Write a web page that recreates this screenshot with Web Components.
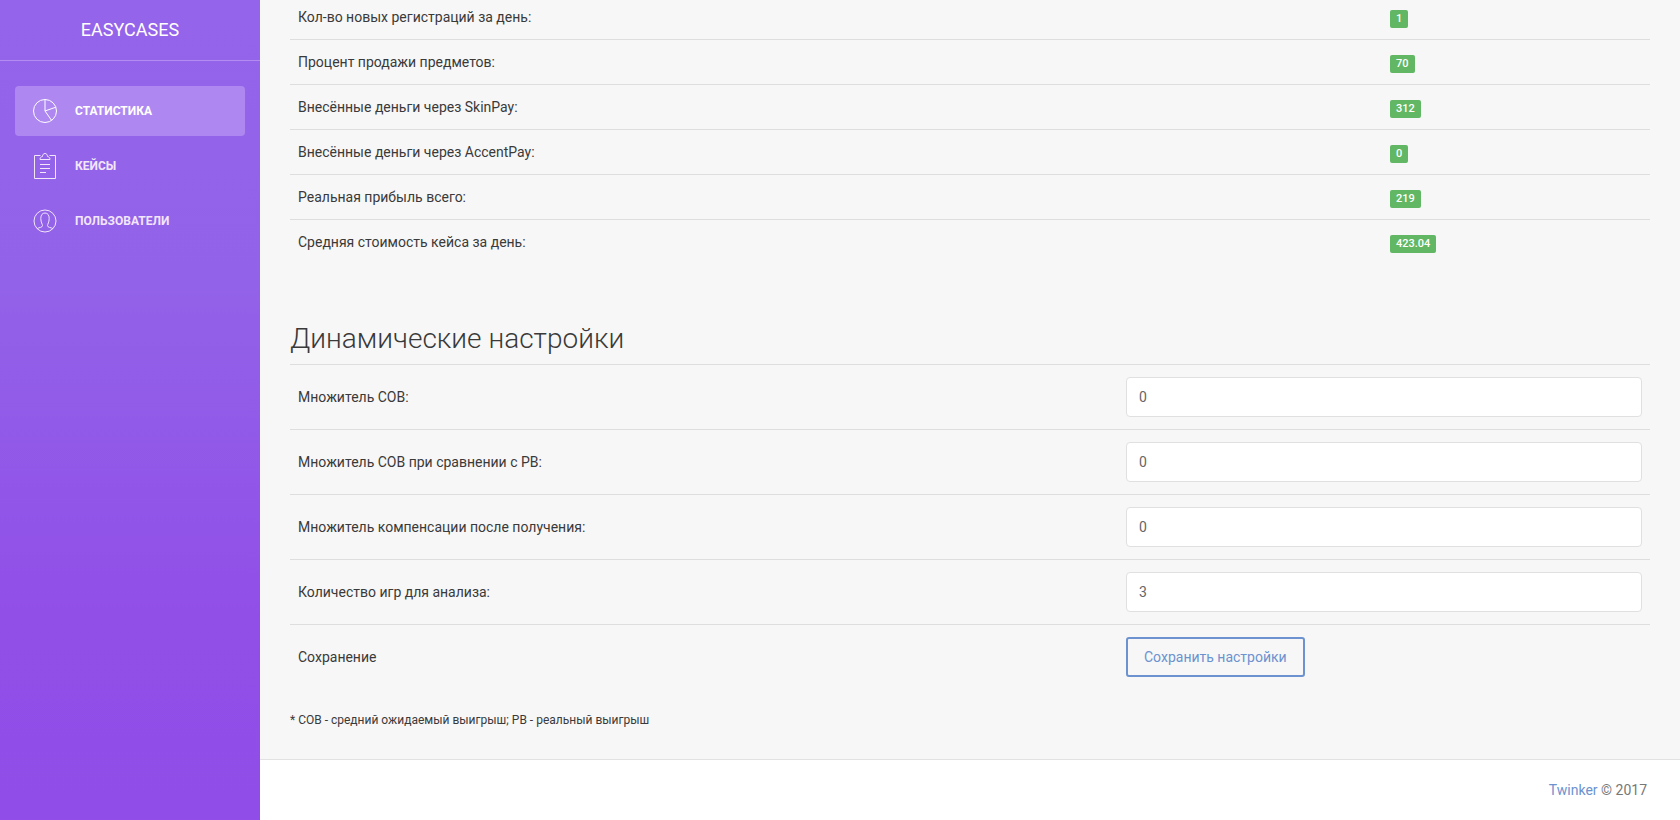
<!DOCTYPE html>
<html lang="ru">
<head>
<meta charset="utf-8">
<meta name="viewport" content="width=device-width, initial-scale=1">
<title>EASYCASES</title>
<style>
  body {
    margin: 0;
    font: 14px/20px Roboto, "Liberation Sans", sans-serif;
    color: #3a3a3a;
    background: #f7f7f7;
    --line: #dddfdf;
    --accent: #6c92cf;
  }
</style>
</head>
<body>
<admin-shell>
  <side-bar slot="side">
    <a-brand slot="brand">EASYCASES</a-brand>
    <nav-item icon="graph" active>Статистика</nav-item>
    <nav-item icon="note">Кейсы</nav-item>
    <nav-item icon="user">Пользователи</nav-item>
  </side-bar>
  <stats-table></stats-table>
  <settings-form heading="Динамические настройки"></settings-form>
  <foot-note>* СОВ - средний ожидаемый выигрыш; РВ - реальный выигрыш</foot-note>
  <page-footer slot="footer"></page-footer>
</admin-shell>

<script>
  class Base extends HTMLElement {
    connectedCallback() {
      if (!this.shadowRoot) this.attachShadow({ mode: 'open' }).innerHTML = this.view();
    }
  }

  customElements.define('admin-shell', class extends Base {
    view() {
      return `<style>
        :host { display: grid; grid-template-columns: 260px minmax(0, 1fr); min-height: 100vh; }
        .page { display: flex; flex-direction: column; }
        main { flex: 1; padding: 0 30px; }
      </style>
      <slot name="side"></slot>
      <div class="page"><main><slot></slot></main><slot name="footer"></slot></div>`;
    }
  });

  customElements.define('side-bar', class extends Base {
    view() {
      return `<style>
        :host { display: block; color: #fff; background: linear-gradient(#9464ea, #9262e8 35%, #914fe8 75%, #904de7); }
        header { height: 60px; display: grid; place-items: center; border-bottom: 1px solid #b28cf0; }
        nav { display: grid; gap: 5px; padding: 25px 15px; }
      </style>
      <header><slot name="brand"></slot></header>
      <nav><slot></slot></nav>`;
    }
  });

  customElements.define('a-brand', class extends Base {
    view() {
      return `<style>
        :host { display: block; }
        a { color: inherit; text-decoration: none; font-size: 18px; line-height: 30px; }
      </style><a href="#"><slot></slot></a>`;
    }
  });

  const icons = {
    graph: '<circle cx="14" cy="14" r="11.5"/><path d="M14 2.5V14L24.8 10.2M14 14L20.6 23.4"/>',
    note: '<path d="M9.5 3.5H3.5V26.5H24.5V3.5H18.5"/><path d="M9 7.5C9 5.5 10 4.8 11.5 4.5C11.6 2.5 12.6 1.5 14 1.5S16.4 2.5 16.5 4.5C18 4.8 19 5.5 19 7.5Z"/><path d="M9 12.5H19M9 16.5H19M9 20.5H15"/>',
    user: '<circle cx="14" cy="14" r="11"/><path d="M6 21.6C8 20.4 11.5 20.6 11.5 18.6C11.5 17 9.8 15.5 9.8 11.5C9.8 8 11.4 6 14 6S18.2 8 18.2 11.5C18.2 15.5 16.5 17 16.5 18.6C16.5 20.6 20 20.4 22 21.6"/>'
  };

  customElements.define('nav-item', class extends Base {
    view() {
      return `<style>
        :host { display: block; }
        a { display: flex; align-items: center; gap: 16px; height: 50px; padding: 0 16px; border-radius: 4px;
            color: #f3e6fb; text-decoration: none; text-transform: uppercase;
            font-size: 12px; font-weight: 700; line-height: 30px; }
        :host([active]) a { color: #fff; background: #ae88f0; }
        svg { width: 28px; height: 28px; fill: none; stroke: currentColor; stroke-width: 1; }
      </style>
      <a href="#"><svg viewBox="0 0 28 28" aria-hidden="true">${icons[this.getAttribute('icon')]}</svg><span><slot></slot></span></a>`;
    }
  });

  customElements.define('count-badge', class extends Base {
    view() {
      return `<style>
        :host { display: block; width: fit-content; padding: 0 6px; border-radius: 2px; background: #61b764; color: #fff;
                font-size: 11px; font-weight: 500; line-height: 18px; }
      </style><slot></slot>`;
    }
  });

  customElements.define('stats-table', class extends Base {
    view() {
      const rows = [
        ['Кол-во новых регистраций за день:', '1'],
        ['Процент продажи предметов:', '70'],
        ['Внесённые деньги через SkinPay:', '312'],
        ['Внесённые деньги через AccentPay:', '0'],
        ['Реальная прибыль всего:', '219'],
        ['Средняя стоимость кейса за день:', '423.04']
      ];
      return `<style>
        :host { display: block; margin-bottom: 55px; }
        table { width: 100%; border-collapse: separate; border-spacing: 0; table-layout: fixed; }
        th, td { height: 20px; padding: 12px 8px; text-align: left; font-weight: 400; border-top: 1px solid var(--line); }
        td { width: 252px; padding: 14px 8px 10px; }
        tr:first-child > * { border-top: 0; }
        tr:first-child th { padding-top: 7px; }
        tr:first-child td { padding-top: 9px; }
      </style>
      <table>${rows.map(([name, value]) =>
        `<tr><th scope="row">${name}</th><td><count-badge>${value}</count-badge></td></tr>`).join('')}</table>`;
    }
  });

  customElements.define('settings-form', class extends Base {
    view() {
      const rows = [
        ['Множитель СОВ:', '0'],
        ['Множитель СОВ при сравнении с РВ:', '0'],
        ['Множитель компенсации после получения:', '0'],
        ['Количество игр для анализа:', '3']
      ];
      return `<style>
        :host { display: block; }
        h2 { margin: 0 0 5px; font-size: 28px; font-weight: 300; line-height: 40px; }
        .row { display: grid; grid-template-columns: 69fr 43fr; align-items: center; padding: 12px 8px; border-top: 1px solid var(--line); }
        input { box-sizing: border-box; width: 100%; height: 40px; padding: 8px 12px; border: 1px solid #e0e0e0; border-radius: 4px;
                background: #fff; color: #666; font: inherit; outline: 0; }
        button { justify-self: start; height: 40px; padding: 0 16px; border: 2px solid var(--accent); border-radius: 3px;
                 background: transparent; color: var(--accent); font: inherit; }
      </style>
      <h2>${this.getAttribute('heading')}</h2>
      <form>${rows.map(([name, value], i) =>
        `<div class="row"><label for="f${i}">${name}</label><input id="f${i}" type="text" value="${value}"></div>`).join('')}
        <div class="row"><label for="save">Сохранение</label><button id="save" type="button">Сохранить настройки</button></div>
      </form>`;
    }
  });

  customElements.define('foot-note', class extends Base {
    view() {
      return `<style>
        :host { display: block; padding: 21px 0 29px; font-size: 12px; }
        p { margin: 0; }
      </style><p><slot></slot></p>`;
    }
  });

  customElements.define('page-footer', class extends Base {
    view() {
      return `<style>
        :host { display: block; background: #fff; border-top: 1px solid #e2e2e2; }
        footer { padding: 20px 33px; text-align: right; color: #777; }
        a { color: var(--accent); text-decoration: none; }
      </style><footer><a href="#">Twinker</a> © 2017</footer>`;
    }
  });
</script>
</body>
</html>
